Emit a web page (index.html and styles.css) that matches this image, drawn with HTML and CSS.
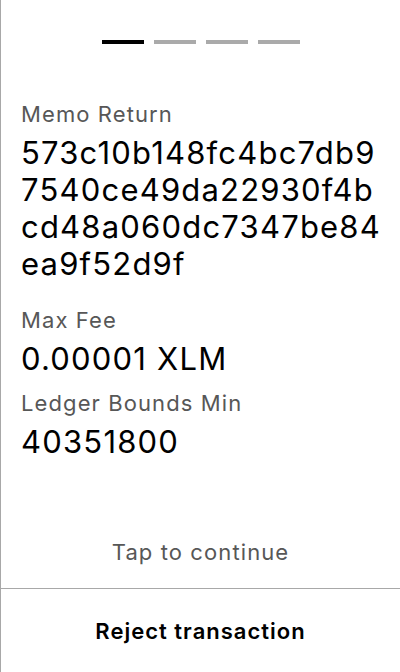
FILE: index.html
```html
<!DOCTYPE html>
<html>
<head>
<meta charset="utf-8">
<link rel="stylesheet" href="styles.css">
</head>
<body>
<div class="screen">
  <div class="pager">
    <span class="dash active"></span>
    <span class="dash"></span>
    <span class="dash"></span>
    <span class="dash"></span>
  </div>
  <div class="fields">
    <div class="field field-long">
      <div class="label">Memo Return</div>
      <div class="value hash">573c10b148fc4bc7db97540ce49da22930f4bcd48a060dc7347be84ea9f52d9f</div>
    </div>
    <div class="field">
      <div class="label">Max Fee</div>
      <div class="value">0.00001 XLM</div>
    </div>
    <div class="field">
      <div class="label">Ledger Bounds Min</div>
      <div class="value">40351800</div>
    </div>
  </div>
  <div class="tap">Tap to continue</div>
  <div class="footer">Reject transaction</div>
</div>
</body>
</html>
```
FILE: styles.css
```css
html, body {
  margin: 0;
  padding: 0;
  background: #fff;
}
body {
  font-family: Inter, "Noto Sans", sans-serif;
  color: #000;
}
.screen {
  height: 672px;
  box-sizing: border-box;
  border-left: 1px solid #a8a8a8;
  display: flex;
  flex-direction: column;
}
.pager {
  display: flex;
  justify-content: center;
  gap: 10px;
  padding-top: 40px;
}
.dash {
  width: 42px;
  height: 4px;
  background: #aaaaaa;
}
.dash.active {
  background: #000;
}
.fields {
  padding: 56px 15px 0 20px;
  display: flex;
  flex-direction: column;
  gap: 12px;
}
.field-long {
  margin-bottom: 12px;
}
.label {
  font-size: 22px;
  line-height: 28px;
  letter-spacing: 1.1px;
  color: #575757;
}
.value {
  margin-top: 6px;
  font-size: 31px;
  line-height: 37px;
  letter-spacing: 1.2px;
  color: #000;
}
.hash {
  word-break: break-all;
}
.tap {
  margin-top: auto;
  text-align: center;
  font-size: 22px;
  line-height: 28px;
  letter-spacing: 1.1px;
  color: #575757;
  padding-bottom: 22px;
}
.footer {
  border-top: 1px solid #a8a8a8;
  height: 83px;
  display: flex;
  align-items: center;
  justify-content: center;
  font-size: 22px;
  font-weight: 600;
  letter-spacing: 1px;
}
```
